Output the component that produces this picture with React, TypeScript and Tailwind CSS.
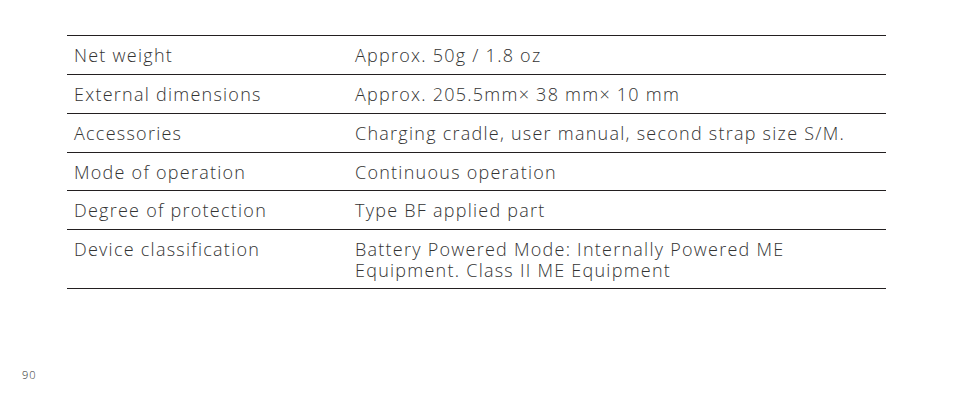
import React from "react";

const rows: [string, string[], string][] = [
  ["Net weight", ["Approx. 50g / 1.8 oz"], "pb-[8px]"],
  ["External dimensions", ["Approx. 205.5mm× 38 mm× 10 mm"], "pb-[8px]"],
  ["Accessories", ["Charging cradle, user manual, second strap size S/M."], "pb-[8px]"],
  ["Mode of operation", ["Continuous operation"], "pb-[7px]"],
  ["Degree of protection", ["Type BF applied part"], "pb-[8px]"],
  ["Device classification", ["Battery Powered Mode: Internally Powered ME", "Equipment. Class II ME Equipment"], "pb-[7px]"],
];

export default function App() {
  return (
    <div
      className="relative w-[954px] h-[400px] bg-white text-[#333333]"
      style={{ fontFamily: '"Open Sans", "Liberation Sans", sans-serif' }}
    >
      <div className="pt-[35px] pl-[67px] w-[886px]">
        <div className="border-t border-[#231f20]">
          {rows.map(([k, v, pb]) => (
            <div
              key={k}
              className={`flex border-b border-[#231f20] pt-[9px] text-[18px] leading-[21px] font-light tracking-[1.25px] ${pb}`}
            >
              <div className="w-[288px] pl-[7px] shrink-0">{k}</div>
              <div className="flex flex-col">
                {v.map((l) => (
                  <span key={l}>{l}</span>
                ))}
              </div>
            </div>
          ))}
        </div>
      </div>
      <div className="absolute left-[22px] top-[368px] text-[11px] leading-[14px] font-light tracking-[1px]">90</div>
    </div>
  );
}
